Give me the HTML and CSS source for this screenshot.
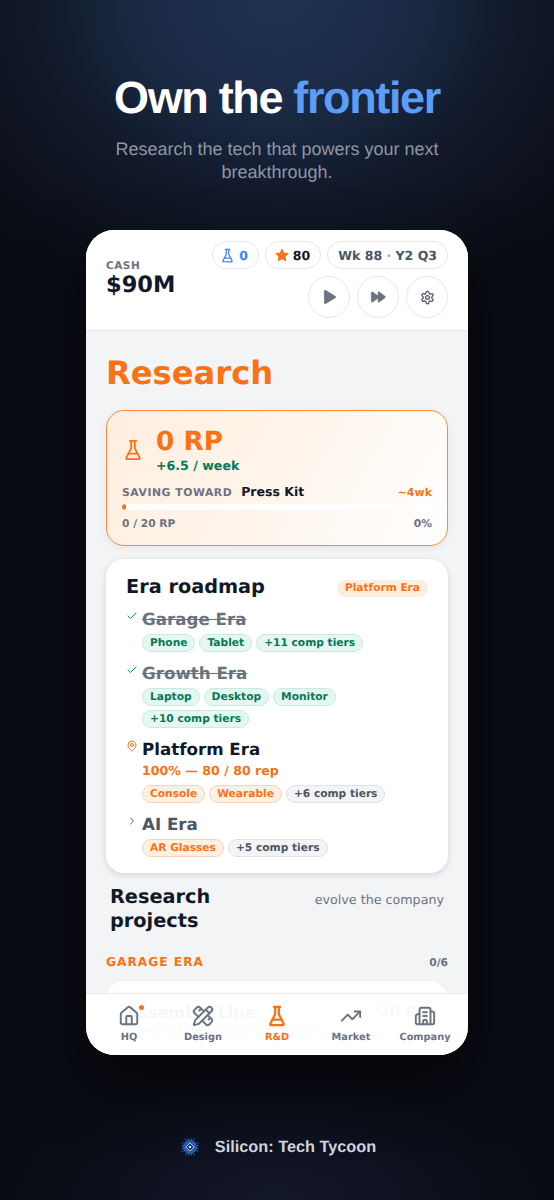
FILE: index.html
```html
<!DOCTYPE html>
<html lang="en">
<head>
<meta charset="utf-8">
<title>Silicon: Tech Tycoon</title>
<link rel="stylesheet" href="styles.css">
</head>
<body>
<div class="screen">
  <header class="hero">
    <h1 class="hero-title">Own the <span class="hero-accent">frontier</span></h1>
    <p class="hero-sub">Research the tech that powers your next breakthrough.</p>
  </header>

  <div class="phone">
    <div class="topbar">
      <div class="cash">
        <div class="cash-label">CASH</div>
        <div class="cash-value">$90M</div>
      </div>
      <div class="top-right">
        <div class="chips">
          <div class="chip chip-blue">
            <svg class="ic ic-15" viewBox="0 0 24 24"><path d="M10 2v7.527a2 2 0 0 1-.211.896L4.72 20.55a1 1 0 0 0 .9 1.45h12.76a1 1 0 0 0 .9-1.45l-5.069-10.127A2 2 0 0 1 14 9.527V2"/><path d="M8.5 2h7"/><path d="M7 16h10"/></svg>
            <span>0</span>
          </div>
          <div class="chip chip-dark">
            <svg class="star ic-14" viewBox="0 0 24 24"><path d="M12 2.500l3 6.300 6.900.9-5 4.800 1.300 6.900-6.200-3.400-6.200 3.400 1.300-6.900-5-4.800 6.900-.9z"/></svg>
            <span>80</span>
          </div>
          <div class="chip chip-gray"><span>Wk 88 <span class="dot">·</span> Y2 Q3</span></div>
        </div>
        <div class="controls">
          <div class="ctrl"><svg class="ic-solid ic-16" viewBox="0 0 24 24"><path d="M5 3.500v17a1.500 1.500 0 0 0 2.300 1.200l14-8.500a1.400 1.400 0 0 0 0-2.400l-14-8.500A1.500 1.500 0 0 0 5 3.500z"/></svg></div>
          <div class="ctrl"><svg class="ic-solid ic-16" viewBox="0 0 24 24"><path d="M2 5.500v13a1.200 1.200 0 0 0 1.900 1L12 13.500v5a1.200 1.200 0 0 0 1.900 1l8.600-6.500a1.300 1.300 0 0 0 0-2L13.900 4.500a1.200 1.200 0 0 0-1.900 1v5L3.900 4.500A1.200 1.200 0 0 0 2 5.500z"/></svg></div>
          <div class="ctrl"><svg class="ic ic-15" viewBox="0 0 24 24"><path d="M12.220 2h-.44a2 2 0 0 0-2 2v.18a2 2 0 0 1-1 1.730l-.43.25a2 2 0 0 1-2 0l-.15-.08a2 2 0 0 0-2.730.73l-.22.38a2 2 0 0 0 .73 2.730l.15.1a2 2 0 0 1 1 1.720v.51a2 2 0 0 1-1 1.740l-.15.09a2 2 0 0 0-.73 2.730l.22.38a2 2 0 0 0 2.730.73l.15-.08a2 2 0 0 1 2 0l.43.25a2 2 0 0 1 1 1.730V20a2 2 0 0 0 2 2h.44a2 2 0 0 0 2-2v-.18a2 2 0 0 1 1-1.730l.43-.25a2 2 0 0 1 2 0l.15.08a2 2 0 0 0 2.730-.73l.22-.39a2 2 0 0 0-.73-2.730l-.15-.08a2 2 0 0 1-1-1.740v-.5a2 2 0 0 1 1-1.740l.15-.09a2 2 0 0 0 .73-2.730l-.22-.38a2 2 0 0 0-2.730-.73l-.15.08a2 2 0 0 1-2 0l-.43-.25a2 2 0 0 1-1-1.730V4a2 2 0 0 0-2-2z"/><circle cx="12" cy="12" r="3"/></svg></div>
        </div>
      </div>
    </div>

    <main class="content">
      <h2 class="page-title">Research</h2>

      <section class="rp-card">
        <div class="rp-head">
          <svg class="ic ic-22 orange" viewBox="0 0 24 24"><path d="M10 2v7.527a2 2 0 0 1-.211.896L4.720 20.550a1 1 0 0 0 .9 1.450h12.760a1 1 0 0 0 .9-1.450l-5.069-10.127A2 2 0 0 1 14 9.527V2"/><path d="M8.500 2h7"/><path d="M7 16h10"/></svg>
          <div>
            <div class="rp-value">0 RP</div>
            <div class="rp-rate">+6.5 / week</div>
          </div>
        </div>
        <div class="saving">
          <span class="saving-label">SAVING TOWARD</span>
          <span class="saving-name">Press Kit</span>
          <span class="saving-eta">~4wk</span>
        </div>
        <div class="bar"><div class="bar-fill"></div></div>
        <div class="bar-foot"><span>0 / 20 RP</span><span>0%</span></div>
      </section>

      <section class="era-card">
        <div class="era-head">
          <h3 class="era-title">Era roadmap</h3>
          <span class="era-badge">Platform Era</span>
        </div>

        <div class="era">
          <svg class="ic ic-12 era-ic green" viewBox="0 0 24 24"><path d="M20 6 9 17l-5-5"/></svg>
          <div class="era-body">
            <div class="era-name done">Garage Era</div>
            <div class="tags">
              <span class="tag tag-green">Phone</span><span class="tag tag-green">Tablet</span><span class="tag tag-green">+11 comp tiers</span>
            </div>
          </div>
        </div>
        <div class="era">
          <svg class="ic ic-12 era-ic green" viewBox="0 0 24 24"><path d="M20 6 9 17l-5-5"/></svg>
          <div class="era-body">
            <div class="era-name done">Growth Era</div>
            <div class="tags">
              <span class="tag tag-green">Laptop</span><span class="tag tag-green">Desktop</span><span class="tag tag-green">Monitor</span><span class="tag tag-green">+10 comp tiers</span>
            </div>
          </div>
        </div>
        <div class="era">
          <svg class="ic ic-12 era-ic orange" viewBox="0 0 24 24"><path d="M20 10c0 4.993-5.539 10.193-7.399 11.799a1 1 0 0 1-1.202 0C9.539 20.193 4 14.993 4 10a8 8 0 0 1 16 0"/><circle cx="12" cy="10" r="3"/></svg>
          <div class="era-body">
            <div class="era-name">Platform Era</div>
            <div class="era-progress">100% — 80 / 80 rep</div>
            <div class="tags">
              <span class="tag tag-orange">Console</span><span class="tag tag-orange">Wearable</span><span class="tag tag-gray">+6 comp tiers</span>
            </div>
          </div>
        </div>
        <div class="era">
          <svg class="ic ic-12 era-ic slate" viewBox="0 0 24 24"><path d="m9 18 6-6-6-6"/></svg>
          <div class="era-body">
            <div class="era-name future">AI Era</div>
            <div class="tags">
              <span class="tag tag-orange">AR Glasses</span><span class="tag tag-gray">+5 comp tiers</span>
            </div>
          </div>
        </div>
      </section>

      <div class="projects-head">
        <h3 class="projects-title">Research projects</h3>
        <span class="projects-note">evolve the company</span>
      </div>

      <div class="group-head">
        <span class="group-name">GARAGE ERA</span>
        <span class="group-count">0/6</span>
      </div>

      <div class="project">
        <div class="project-row"><span class="project-name">Assembly Line</span><span class="project-cost">20 RP</span></div>
        <div class="project-desc">Manufacture products 2x faster.</div>
      </div>
    </main>

    <nav class="tabbar">
      <div class="tab">
        <span class="tab-icon">
          <svg class="ic" viewBox="0 0 24 24"><path d="M15 21v-8a1 1 0 0 0-1-1h-4a1 1 0 0 0-1 1v8"/><path d="M3 10a2 2 0 0 1 .709-1.528l7-5.999a2 2 0 0 1 2.582 0l7 5.999A2 2 0 0 1 21 10v9a2 2 0 0 1-2 2H5a2 2 0 0 1-2-2z"/></svg>
          <span class="tab-dot"></span>
        </span>
        <span>HQ</span>
      </div>
      <div class="tab">
        <span class="tab-icon"><svg class="ic" viewBox="0 0 24 24"><path d="M13 7 8.700 2.700a2.410 2.410 0 0 0-3.400 0L2.700 5.300a2.410 2.410 0 0 0 0 3.400L7 13"/><path d="m8 6 2-2"/><path d="m18 16 2-2"/><path d="m17 11 4.300 4.300c.94.94.94 2.460 0 3.400l-2.600 2.600c-.94.94-2.460.94-3.400 0L11 17"/><path d="M21.174 6.812a1 1 0 0 0-3.986-3.987L3.842 16.174a2 2 0 0 0-.5.83l-1.321 4.352a.5.5 0 0 0 .623.622l4.353-1.320a2 2 0 0 0 .83-.497z"/><path d="m15 5 4 4"/></svg></span>
        <span>Design</span>
      </div>
      <div class="tab tab-active">
        <span class="tab-icon"><svg class="ic" viewBox="0 0 24 24"><path d="M10 2v7.527a2 2 0 0 1-.211.896L4.720 20.550a1 1 0 0 0 .9 1.450h12.760a1 1 0 0 0 .9-1.450l-5.069-10.127A2 2 0 0 1 14 9.527V2"/><path d="M8.500 2h7"/><path d="M7 16h10"/></svg></span>
        <span>R&amp;D</span>
      </div>
      <div class="tab">
        <span class="tab-icon"><svg class="ic" viewBox="0 0 24 24"><path d="M16 7h6v6"/><path d="m22 7-8.500 8.500-5-5L2 17"/></svg></span>
        <span>Market</span>
      </div>
      <div class="tab">
        <span class="tab-icon"><svg class="ic" viewBox="0 0 24 24"><path d="M10 12h4"/><path d="M10 8h4"/><path d="M14 21v-3a2 2 0 0 0-4 0v3"/><path d="M6 10H4a2 2 0 0 0-2 2v7a2 2 0 0 0 2 2h16a2 2 0 0 0 2-2V9a2 2 0 0 0-2-2h-2"/><path d="M6 21V5a2 2 0 0 1 2-2h8a2 2 0 0 1 2 2v16"/></svg></span>
        <span>Company</span>
      </div>
    </nav>
  </div>

  <footer class="brand">
    <span class="logo">
      <svg class="logo-svg" viewBox="0 0 24 24">
        <circle class="logo-disc" cx="12" cy="12" r="7"/>
        <path class="logo-pins" d="M8 3.500v2M10.700 3.500v2M13.300 3.500v2M16 3.500v2M8 18.500v2M10.700 18.500v2M13.300 18.500v2M16 18.500v2M3.500 8h2M3.500 10.700h2M3.500 13.300h2M3.500 16h2M18.500 8h2M18.500 10.700h2M18.500 13.300h2M18.500 16h2"/>
        <path class="logo-diamond" d="M12 8 16 12 12 16 8 12z"/>
        <circle class="logo-core" cx="12" cy="12" r="1.300"/>
      </svg>
    </span>
    <span class="brand-name">Silicon: Tech Tycoon</span>
  </footer>
</div>
</body>
</html>
```
FILE: styles.css
```css
* { box-sizing: border-box; }
html, body { margin: 0; padding: 0; }
body {
  width: 554px;
  height: 1200px;
  overflow: hidden;
  background: #0a0c14;
  text-rendering: geometricPrecision;
}
.screen {
  width: 554px;
  height: 1200px;
  display: flex;
  flex-direction: column;
  align-items: center;
  background:
    radial-gradient(ellipse 390px 320px at 50% 0, #1f3250 0%, #1b2b46 32%, rgba(20,30,50,.62) 65%, rgba(10,12,20,0) 100%),
    radial-gradient(ellipse 260px 120px at 50% 100%, #12172a 0%, rgba(10,12,20,0) 100%),
    #0a0c14;
}
.hero {
  padding-top: 70px;
  width: 382px;
  text-align: center;
  font-family: "Liberation Sans", Arial, sans-serif;
}
.hero-title {
  margin: 0;
  font-size: 45px;
  line-height: 56px;
  font-weight: 700;
  letter-spacing: -1.350px;
  color: #fff;
  white-space: nowrap;
}
.hero-accent { color: #5b9df9; }
.hero-sub {
  margin: 12px 0 0;
  font-size: 18px;
  line-height: 23px;
  color: #8f96a3;
  padding: 0 10px;
}
.phone {
  position: relative;
  margin-top: 46px;
  width: 382px;
  height: 825px;
  border-radius: 28px;
  overflow: hidden;
  background: #f3f4f6;
  font-family: "DejaVu Sans", sans-serif;
  box-shadow: 0 30px 60px rgba(0,0,0,.55);
}
.topbar {
  height: 101px;
  background: #fff;
  border-bottom: 1px solid #e5e7eb;
  padding: 11px 20px 0;
  display: flex;
  justify-content: space-between;
}
.cash { padding-top: 18px; }
.cash-label {
  font-size: 10.500px;
  line-height: 14px;
  font-weight: 700;
  letter-spacing: .5px;
  color: #6b7280;
}
.cash-value {
  font-size: 22.500px;
  line-height: 25px;
  font-weight: 700;
  color: #111827;
}
.top-right {
  display: flex;
  flex-direction: column;
  align-items: flex-end;
  gap: 7px;
}
.chips { display: flex; gap: 6px; }
.chip {
  height: 28px;
  border: 1px solid #e5e7eb;
  border-radius: 14px;
  display: flex;
  align-items: center;
  gap: 4px;
  font-size: 12.500px;
  font-weight: 700;
  white-space: nowrap;
}
.chip-blue { color: #3b82f6; padding: 0 10px 0 7px; }
.chip-dark { color: #111827; padding: 0 10px 0 9px; }
.chip-gray { color: #4b5563; padding: 0 10px; }
.star {
  fill: #f97316;
  stroke: #f97316;
  stroke-width: 2;
  stroke-linejoin: round;
  flex: none;
}
.dot { color: #9ca3af; }
.controls { display: flex; gap: 7px; }
.ctrl {
  width: 42px;
  height: 42px;
  border: 1px solid #e5e7eb;
  border-radius: 50%;
  display: flex;
  align-items: center;
  justify-content: center;
  color: #4b5563;
}
.ic {
  fill: none;
  stroke: currentColor;
  stroke-width: 2;
  stroke-linecap: round;
  stroke-linejoin: round;
  flex: none;
}
.ic-solid { fill: #6b7280; stroke: #6b7280; stroke-width: 1; stroke-linejoin: round; flex: none; }
.ic-12 { width: 12px; height: 12px; }
.ic-14 { width: 14px; height: 14px; }
.ic-15 { width: 15px; height: 15px; }
.ic-16 { width: 16px; height: 16px; }
.ic-22 { width: 22px; height: 22px; }
.orange { color: #f97316; }
.green { color: #0f8f6a; }
.slate { color: #4b5563; }
.content { padding: 20px 20px 0; }
.page-title {
  margin: 0 0 15px;
  font-size: 32.200px;
  line-height: 44px;
  font-weight: 700;
  color: #f97316;
}
.rp-card {
  height: 136px;
  border: 1px solid #f98a3c;
  border-radius: 18px;
  padding: 15px 15px 0;
  background: linear-gradient(120deg, #ffeedf 0%, #fff5ec 50%, #ffffff 100%);
  box-shadow: 0 2px 8px rgba(17,24,39,.06);
}
.rp-head { display: flex; align-items: center; gap: 12px; }
.rp-value {
  font-size: 26.300px;
  line-height: 32px;
  font-weight: 700;
  color: #f97316;
}
.rp-rate {
  font-size: 12.600px;
  line-height: 15px;
  font-weight: 700;
  color: #047857;
}
.saving {
  margin-top: 11px;
  display: flex;
  align-items: baseline;
}
.saving-label {
  font-size: 10.800px;
  font-weight: 700;
  letter-spacing: .55px;
  color: #6b7280;
}
.saving-name {
  margin-left: 9px;
  font-size: 12.500px;
  font-weight: 700;
  color: #111827;
}
.saving-eta {
  margin-left: auto;
  font-size: 11px;
  font-weight: 700;
  color: #f97316;
}
.bar {
  margin-top: 5px;
  height: 6px;
  border-radius: 3px;
  background: #fff;
  overflow: hidden;
}
.bar-fill {
  width: 4px;
  height: 6px;
  border-radius: 3px;
  background: #f97316;
}
.bar-foot {
  margin-top: 7px;
  display: flex;
  justify-content: space-between;
  font-size: 10.700px;
  font-weight: 700;
  color: #6b7280;
}
.era-card {
  margin-top: 13px;
  height: 314px;
  border-radius: 18px;
  background: #fff;
  padding: 15px 20px 0;
  box-shadow: 0 2px 6px rgba(17,24,39,.14);
}
.era-head {
  display: flex;
  justify-content: space-between;
  align-items: center;
  margin-bottom: 7px;
}
.era-title {
  margin: 0;
  font-size: 19.300px;
  line-height: 26px;
  font-weight: 700;
  color: #111827;
}
.era-badge {
  height: 17px;
  padding: 0 8px;
  margin-top: 3px;
  border-radius: 9px;
  background: #ffedde;
  color: #f97316;
  font-size: 10.600px;
  line-height: 17px;
  font-weight: 700;
}
.era {
  display: flex;
  gap: 4px;
  margin-bottom: 9px;
}
.era-ic { margin-top: 3px; }
.era-body { flex: 1; min-width: 0; }
.era-name {
  font-size: 16.700px;
  line-height: 24px;
  font-weight: 700;
  color: #111827;
}
.era-name.done { color: #6b7280; text-decoration: line-through; }
.era-name.future { color: #4b5563; }
.era-progress {
  font-size: 12.600px;
  line-height: 20px;
  padding-bottom: 1px;
  font-weight: 700;
  color: #f97316;
}
.tags {
  display: flex;
  flex-wrap: wrap;
  gap: 4px;
  margin-top: 3px;
}
.tag {
  height: 18px;
  padding: 0 7px;
  border-radius: 9px;
  border: 1px solid;
  font-size: 10.650px;
  line-height: 16px;
  font-weight: 700;
  white-space: nowrap;
}
.tag-green { background: #e6f7f1; border-color: #c5ecdf; color: #047857; }
.tag-orange { background: #fff0e4; border-color: #fdd3b5; color: #f97316; }
.tag-gray { background: #f3f4f6; border-color: #dfe2e6; color: #4b5563; }
.projects-head {
  margin-top: 12px;
  padding: 0 4px;
  display: flex;
  justify-content: space-between;
  align-items: flex-start;
}
.projects-title {
  margin: 0;
  width: 130px;
  font-size: 19.300px;
  line-height: 24px;
  font-weight: 700;
  color: #111827;
}
.projects-note {
  margin-top: 7px;
  font-size: 12.700px;
  color: #6b7280;
}
.group-head {
  margin-top: 19px;
  display: flex;
  justify-content: space-between;
  align-items: center;
  height: 20px;
}
.group-name {
  font-size: 12.200px;
  font-weight: 700;
  letter-spacing: 1px;
  color: #f97316;
}
.group-count {
  font-size: 10.700px;
  font-weight: 700;
  color: #6b7280;
}
.project {
  margin-top: 9px;
  border-radius: 18px;
  background: #fff;
  padding: 21px 20px;
  height: 100px;
  box-shadow: 0 1px 3px rgba(17,24,39,.1);
}
.project-row {
  display: flex;
  justify-content: space-between;
  align-items: center;
  height: 20px;
}
.project-name { font-size: 16px; font-weight: 700; color: #111827; }
.project-cost { font-size: 15px; font-weight: 700; color: #6b7280; }
.project-desc { font-size: 12.250px; line-height: 16px; color: #6b7280; margin-top: 0; }
.tabbar {
  position: absolute;
  left: 0;
  right: 0;
  bottom: 0;
  height: 62px;
  padding: 10px 6px 0;
  display: flex;
  justify-content: space-between;
  background: rgba(255,255,255,.96);
  border-top: 1px solid #e9ebef;
}
.tab {
  flex: 1 1 0;
  display: flex;
  flex-direction: column;
  align-items: center;
  gap: 3px;
  font-size: 9.800px;
  line-height: 14px;
  font-weight: 700;
  color: #6b7280;
  white-space: nowrap;
}
.tab .ic { width: 22px; height: 22px; margin: 1px; display: block; stroke-width: 2.100; }
.tab-active { color: #f97316; }
.tab-active .ic { stroke-width: 2.500; }
.tab-icon { position: relative; display: block; width: 24px; height: 24px; }
.tab-dot {
  position: absolute;
  top: 1px;
  right: -3px;
  width: 5px;
  height: 5px;
  border-radius: 50%;
  background: #f97316;
}
.brand {
  margin-top: 80px;
  display: flex;
  align-items: center;
  gap: 13px;
  font-family: "Liberation Sans", Arial, sans-serif;
}
.logo {
  width: 24px;
  height: 24px;
  border-radius: 6px;
  background: #0c1220;
  display: flex;
}
.logo-svg { width: 24px; height: 24px; }
.logo-disc { fill: #2a5db0; }
.logo-pins { stroke: #2f63b8; stroke-width: 1; fill: none; }
.logo-diamond { fill: #16294f; stroke: #a9ccf8; stroke-width: 1; }
.logo-core { fill: #dbe9fd; }
.brand-name {
  font-size: 16.300px;
  font-weight: 700;
  color: #d1d5db;
}
```
